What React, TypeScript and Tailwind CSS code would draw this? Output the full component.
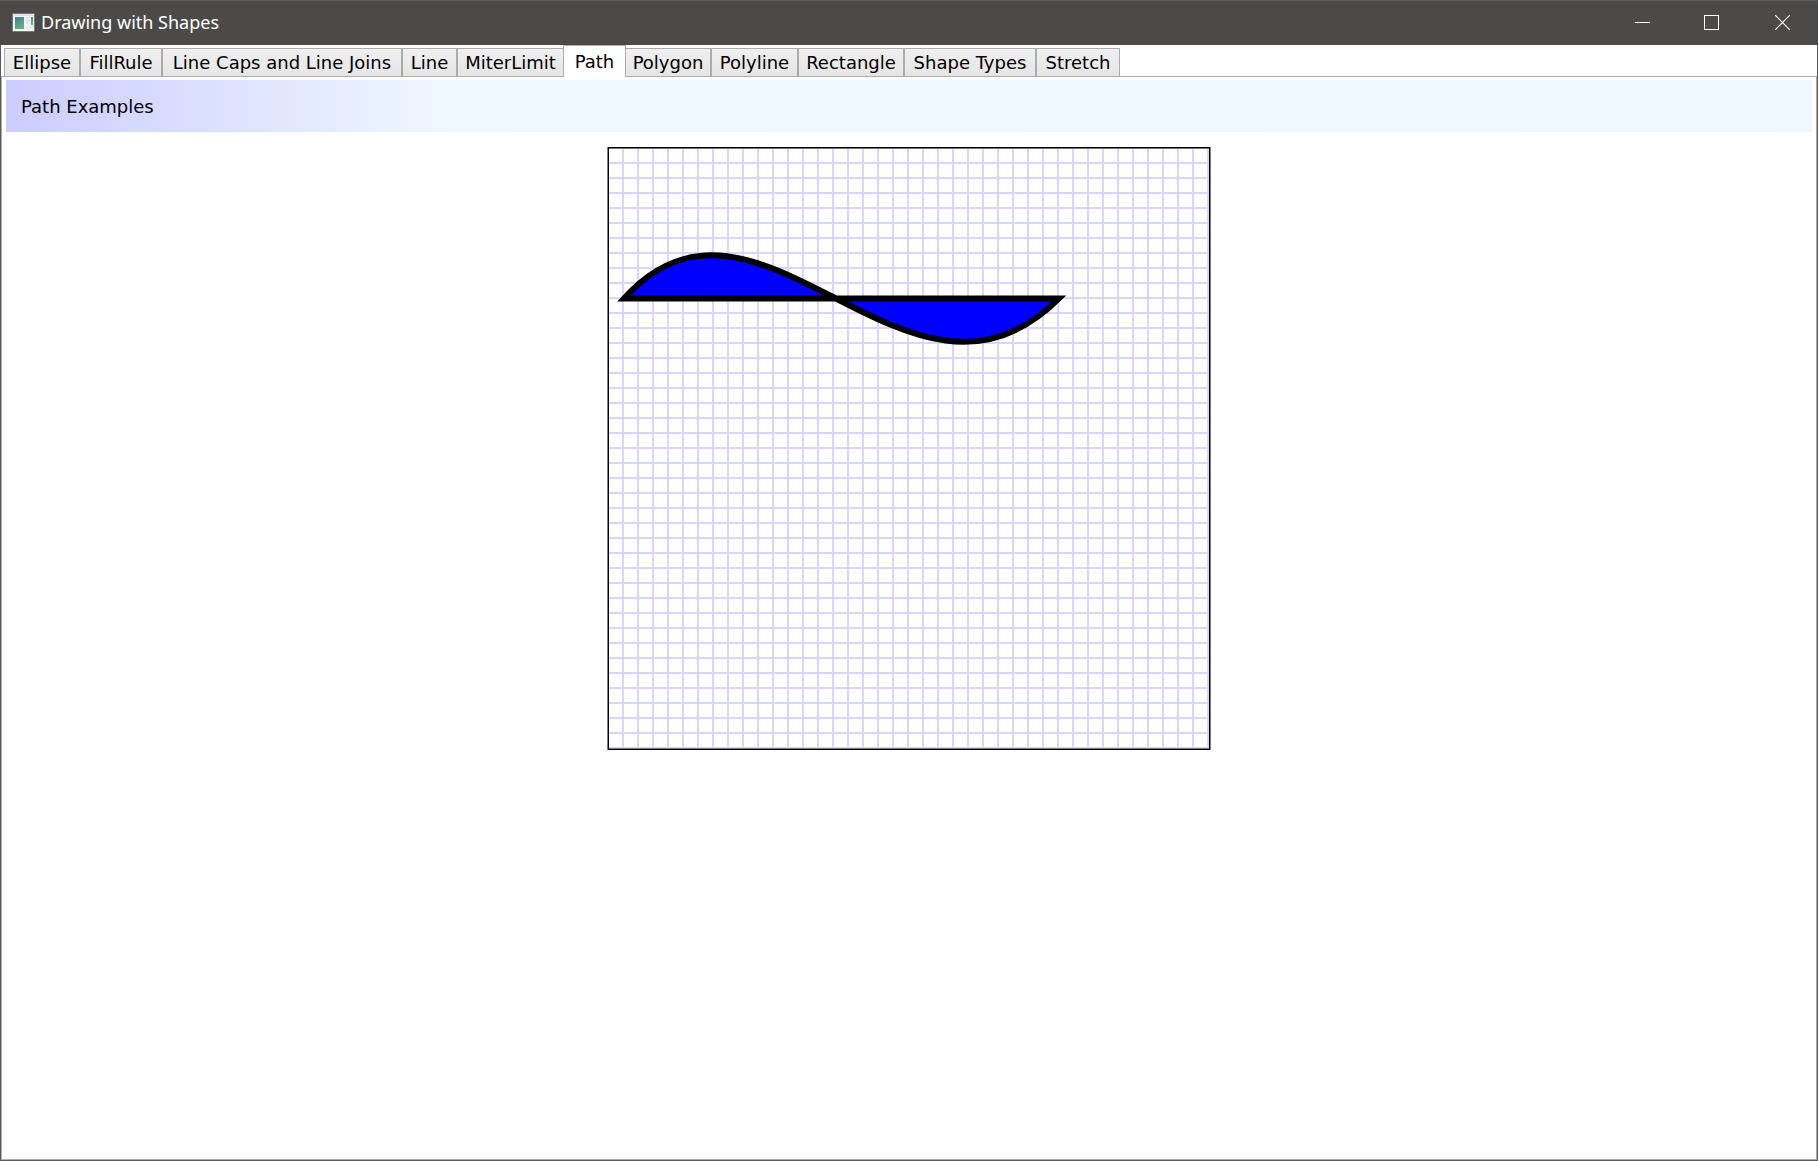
import { useState } from "react";

const tabs = [
  { name: "Ellipse", width: "w-[76px]" },
  { name: "FillRule", width: "w-[82px]" },
  { name: "Line Caps and Line Joins", width: "w-[240px]" },
  { name: "Line", width: "w-[55px]" },
  { name: "MiterLimit", width: "w-[107px]" },
  { name: "Path", width: "w-[63px]" },
  { name: "Polygon", width: "w-[86px]" },
  { name: "Polyline", width: "w-[87px]" },
  { name: "Rectangle", width: "w-[106px]" },
  { name: "Shape Types", width: "w-[132px]" },
  { name: "Stretch", width: "w-[84px]" },
];

function AppIcon() {
  return (
    <svg width="24" height="20" viewBox="0 0 24 20" aria-hidden="true">
      <defs>
        <linearGradient id="pane" x1="0" y1="0" x2="0.3" y2="1">
          <stop offset="0" stopColor="#4377a3" />
          <stop offset="1" stopColor="#62b475" />
        </linearGradient>
      </defs>
      <rect x="0.5" y="0.5" width="22" height="18" rx="1" fill="#f4f4f4" stroke="#75797d" />
      <rect x="1" y="1" width="21" height="2" fill="#dfe3e8" />
      <rect x="3" y="4" width="9" height="12" fill="url(#pane)" />
      <rect x="14" y="4" width="4" height="7" fill="#e6e6e6" />
      <rect x="19" y="4" width="2" height="8" fill="url(#pane)" />
      <rect x="14" y="13" width="7" height="3" fill="#e9e9e9" />
    </svg>
  );
}

function TitleBar() {
  return (
    <header className="flex h-[45px] items-stretch border-t border-[#5b5a58] bg-[#4c4a48] pb-px text-white">
      <div className="flex flex-1 items-center gap-[5px] pl-3">
        <AppIcon />
        <h1 className="pb-px font-['Noto_Sans',sans-serif] text-[18px] leading-6">Drawing with Shapes</h1>
      </div>
      <button type="button" aria-label="Minimize" className="flex w-[69px] items-center justify-center">
        <svg width="15" height="15" viewBox="0 0 15 15">
          <path d="M0 7.5H15" stroke="white" />
        </svg>
      </button>
      <button type="button" aria-label="Maximize" className="flex w-[69px] items-center justify-center">
        <svg width="15" height="15" viewBox="0 0 15 15">
          <rect x="0.5" y="0.5" width="14" height="14" fill="none" stroke="white" />
        </svg>
      </button>
      <button type="button" aria-label="Close" className="flex w-[72px] items-center justify-center">
        <svg width="15" height="15" viewBox="0 0 15 15">
          <path d="M0 0L15 15M15 0L0 15" stroke="white" strokeWidth="1.2" />
        </svg>
      </button>
    </header>
  );
}

function PathDrawing() {
  return (
    <svg width="604" height="604" viewBox="0 0 604 604" role="img" aria-label="Filled Bezier path on a grid">
      <defs>
        <pattern id="grid" x="2" y="2" width="15" height="15" patternUnits="userSpaceOnUse">
          <path d="M14 0V15M0 14H15" stroke="#ccccff" strokeOpacity="0.8" strokeWidth="2" />
        </pattern>
      </defs>
      <rect x="2" y="1.25" width="600" height="600" fill="url(#grid)" />
      <rect x="1.25" y="0.75" width="601.5" height="601.5" fill="none" stroke="black" strokeWidth="1.5" />
      <path
        transform="translate(2 1.5) scale(1.5)"
        d="M10 100C100 0 200 200 300 100Z"
        fill="#0000ff"
        stroke="black"
        strokeWidth="4"
        strokeMiterlimit="10"
      />
    </svg>
  );
}

export default function App() {
  const [active, setActive] = useState("Path");
  return (
    <div className="flex min-h-screen flex-col bg-white font-['DejaVu_Sans',sans-serif] text-[18px] text-black">
      <TitleBar />
      <div className="flex flex-1 flex-col border-x border-b border-[#5b5a58]">
        <div role="tablist" className="flex h-[31px] items-end pl-[3px]">
          {tabs.map(({ name, width }) => (
            <button
              key={name}
              type="button"
              role="tab"
              aria-selected={active === name}
              onClick={() => setActive(name)}
              className={`${width} shrink-0 border border-b-0 border-[#acacac] text-center leading-7 whitespace-nowrap ${
                active === name
                  ? "z-10 -mx-px -mb-px h-8 bg-white"
                  : "h-7 bg-linear-to-b from-[#f0f0f0] to-[#e5e5e5]"
              }`}
            >
              {name}
            </button>
          ))}
        </div>
        <main className="flex flex-1 flex-col border border-[#acacac] px-1 pt-[3px]">
          <h2 className="flex h-[52px] items-center bg-linear-to-r from-[#ccccff] to-[#f0f8ff] to-25% px-[15px]">
            Path Examples
          </h2>
          <div className="flex justify-center pt-[15px]">
            <PathDrawing />
          </div>
        </main>
      </div>
    </div>
  );
}
